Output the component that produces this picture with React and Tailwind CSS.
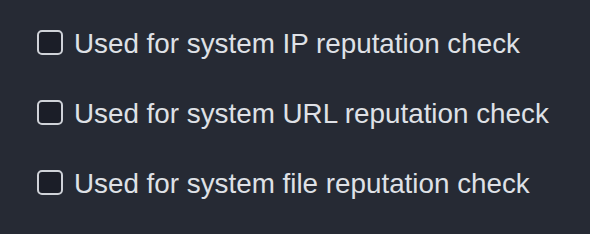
import React from 'react';

const items = [
  'Used for system IP reputation check',
  'Used for system URL reputation check',
  'Used for system file reputation check',
];

export default function App() {
  return (
    <div className="w-[590px] h-[234px] bg-[#262a34] pl-[37px] pt-[30px] font-['Liberation_Sans']">
      <div className="flex flex-col gap-[45px]">
        {items.map((label) => (
          <label key={label} className="flex items-center gap-[11px] h-[25px] text-[27.8px] text-[#dfe1e6] leading-none">
            <span className="w-[26px] h-[25px] rounded-[5px] border-2 border-[#cfd2d8] bg-[#1b1e28] shrink-0" />
            <span className="pt-[2px]">{label}</span>
          </label>
        ))}
      </div>
    </div>
  );
}
